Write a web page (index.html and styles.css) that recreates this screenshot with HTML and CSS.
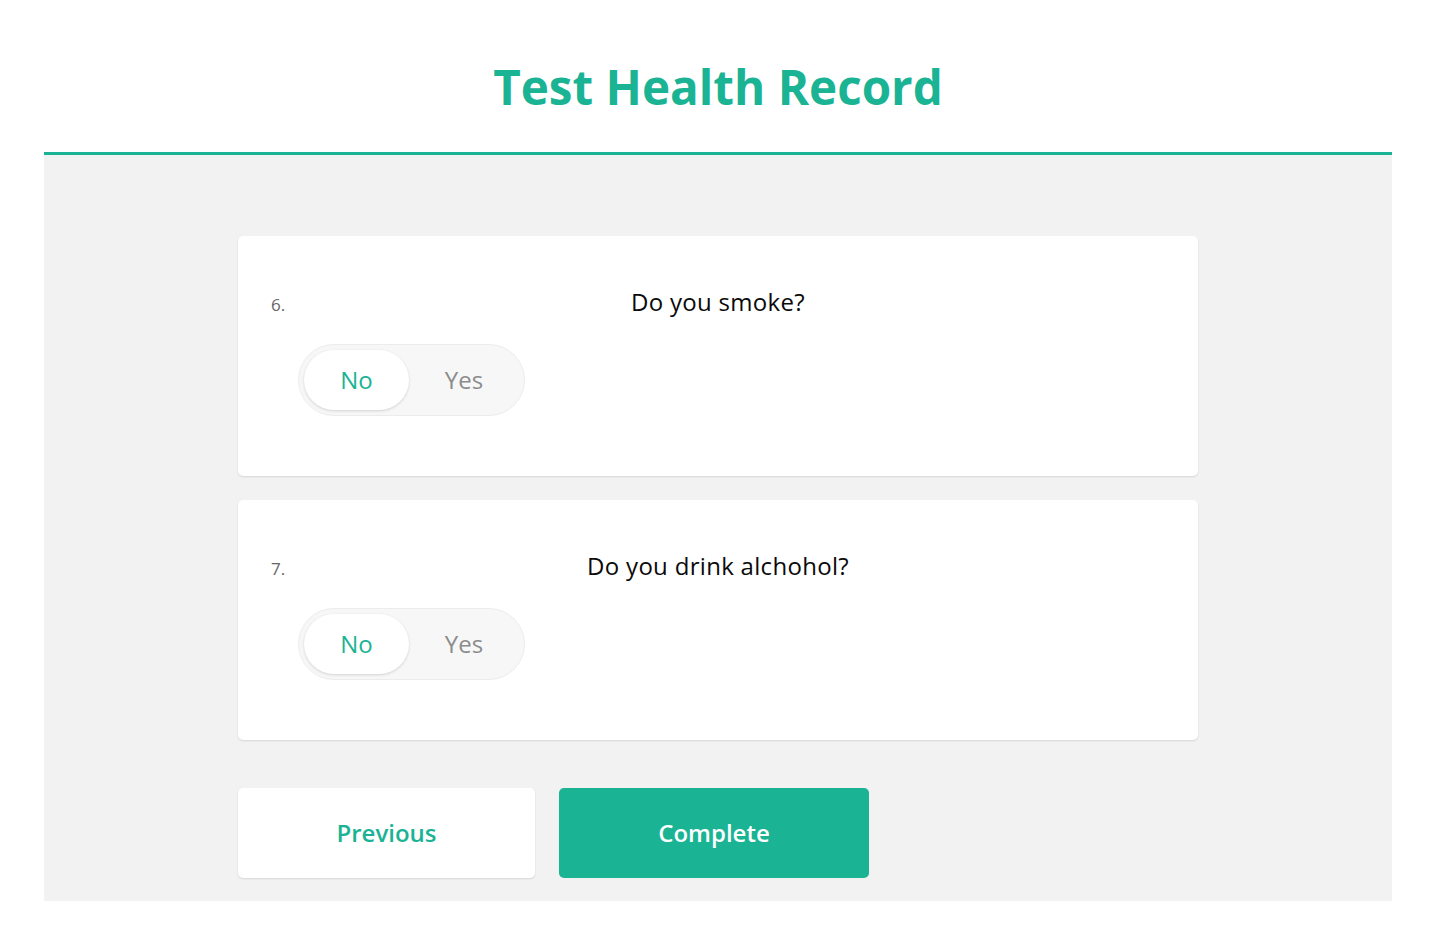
FILE: index.html
```html
<!DOCTYPE html>
<html lang="en">
<head>
<meta charset="utf-8">
<title>Test Health Record</title>
<link rel="stylesheet" href="styles.css">
</head>
<body>
<div class="page">
  <header class="header">
    <h1 class="title">Test Health Record</h1>
  </header>
  <main class="panel">
    <section class="card">
      <div class="question-row">
        <span class="qnum">6.</span>
        <span class="qtext">Do you smoke?</span>
      </div>
      <div class="toggle">
        <span class="opt active">No</span>
        <span class="opt">Yes</span>
      </div>
    </section>
    <section class="card">
      <div class="question-row">
        <span class="qnum">7.</span>
        <span class="qtext">Do you drink alchohol?</span>
      </div>
      <div class="toggle">
        <span class="opt active">No</span>
        <span class="opt">Yes</span>
      </div>
    </section>
    <div class="actions">
      <button class="btn btn-prev">Previous</button>
      <button class="btn btn-complete">Complete</button>
    </div>
  </main>
</div>
</body>
</html>
```
FILE: styles.css
```css
* { box-sizing: border-box; }
html, body { margin: 0; padding: 0; background: #fff; }
body { font-family: "Open Sans", "Noto Sans", sans-serif; color: #1a1a1a; }
.page { padding: 0 41px 0 44px; }
.header { height: 152px; display: flex; justify-content: center; }
.title {
  margin: 0;
  padding-top: 55px;
  font-size: 47.6px;
  font-weight: 700;
  color: #1ab394;
  line-height: 64px;
}
.panel {
  background: #f2f2f2;
  border-top: 3px solid #1ab394;
  padding: 81px 0 23px;
  display: flex;
  flex-direction: column;
  align-items: center;
  gap: 24px;
}
.card {
  width: 960px;
  height: 240px;
  background: #fff;
  border-radius: 5px;
  box-shadow: 0 1px 2px rgba(0,0,0,0.12);
  padding: 50px 33px 0;
}
.question-row {
  position: relative;
  display: flex;
  justify-content: center;
  height: 32px;
}
.qnum {
  position: absolute;
  left: 0;
  top: 7px;
  font-size: 17px;
  color: #666;
}
.qtext {
  font-size: 24px;
  line-height: 32px;
  letter-spacing: 0.3px;
  color: #0a0a0a;
}
.toggle {
  margin: 26px 0 0 27px;
  width: 227px;
  height: 72px;
  border-radius: 36px;
  background: #f7f7f7;
  border: 1px solid #ececec;
  padding: 5px;
  display: flex;
  align-items: center;
}
.opt {
  width: 105px;
  height: 60px;
  border-radius: 30px;
  display: flex;
  align-items: center;
  justify-content: center;
  font-size: 24px;
  padding-bottom: 2px;
  color: #8c8c8c;
}
.opt + .opt { width: 110px; }
.opt.active {
  background: #fff;
  color: #1ab394;
  box-shadow: 0 1px 3px rgba(0,0,0,0.15);
}
.actions {
  width: 960px;
  display: flex;
  gap: 24px;
  margin-top: 24px;
}
.btn {
  height: 90px;
  border: none;
  border-radius: 5px;
  padding: 0 0 2px;
  font-family: "Open Sans", "Noto Sans", sans-serif;
  font-size: 24px;
  font-weight: 600;
  cursor: pointer;
}
.btn-prev {
  width: 297px;
  background: #fff;
  color: #1ab394;
  box-shadow: 0 1px 2px rgba(0,0,0,0.12);
}
.btn-complete {
  width: 310px;
  background: #1ab394;
  color: #fff;
}
```
